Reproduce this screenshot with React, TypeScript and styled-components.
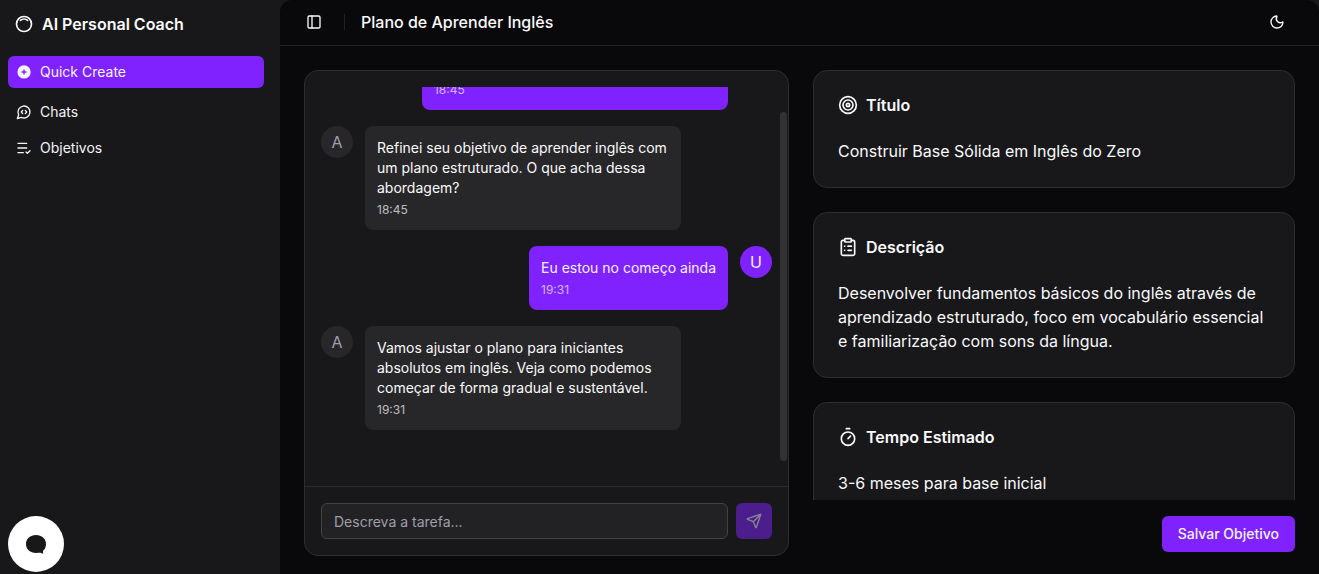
import React from "react";
import styled, { createGlobalStyle } from "styled-components";
import { Target, ClipboardList, Timer, ListCheck, PanelLeft, Moon } from "lucide-react";

const Global = createGlobalStyle`
  *, *::before, *::after { box-sizing: border-box; }
  body {
    margin: 0;
    background: #18181b;
    color: #fafafa;
    font-family: Inter, "Liberation Sans", sans-serif;
    font-size: 16px;
    line-height: 24px;
  }
  button, input { font: inherit; color: inherit; }
  h1, h2, p { margin: 0; }
`;

const Shell = styled.div`
  display: flex;
  height: 100vh;
  overflow: hidden;
`;

const Sidebar = styled.aside`
  flex: 0 0 280px;
  display: flex;
  flex-direction: column;
  padding: 8px 16px 0 8px;
`;

const Brand = styled.a`
  display: flex;
  align-items: center;
  gap: 8px;
  height: 32px;
  padding: 0 6px;
  color: #fafafa;
  font-weight: 600;
  text-decoration: none;
`;

const Nav = styled.nav`
  display: flex;
  flex-direction: column;
  gap: 8px;
  padding-top: 16px;
`;

const NavList = styled.div`
  display: flex;
  flex-direction: column;
  gap: 4px;
`;

const navItem = `
  display: flex;
  align-items: center;
  gap: 8px;
  height: 32px;
  padding: 0 8px;
  border: 0;
  border-radius: 6px;
  font-size: 14px;
  line-height: 20px;
`;

const CreateButton = styled.button`
  ${navItem}
  background: #7f22fe;
  color: #f5f3ff;
  cursor: pointer;
`;

const NavLink = styled.a`
  ${navItem}
  color: #f4f4f5;
  text-decoration: none;
`;

const Main = styled.main`
  flex: 1;
  min-width: 0;
  display: flex;
  flex-direction: column;
  background: #09090b;
  border-radius: 12px 12px 0 0;
`;

const Header = styled.header`
  display: flex;
  align-items: center;
  height: 46px;
  padding: 0 28px 2px 20px;
  border-bottom: 1px solid #222225;
`;

const IconButton = styled.button`
  display: grid;
  place-items: center;
  width: 28px;
  height: 28px;
  padding: 0;
  border: 0;
  border-radius: 6px;
  background: transparent;
  cursor: pointer;
`;

const Divider = styled.span`
  width: 1px;
  height: 16px;
  margin: 0 16px;
  background: #222225;
`;

const PageTitle = styled.h1`
  flex: 1;
  font-size: 16px;
  font-weight: 500;
`;

const Content = styled.div`
  flex: 1;
  min-height: 0;
  display: grid;
  grid-template-columns: minmax(0, 485fr) minmax(0, 482fr);
  gap: 24px;
  padding: 24px 24px 18px;
`;

const Chat = styled.section`
  display: flex;
  flex-direction: column;
  min-height: 0;
  border: 1px solid #2d2d30;
  border-radius: 14px;
  background: #18181b;
  overflow: hidden;
`;

const Conversation = styled.div`
  position: relative;
  flex: 1;
  min-height: 0;
  display: flex;
  flex-direction: column;
  padding: 16px 16px 0;
`;

const Messages = styled.div`
  flex: 1;
  min-height: 0;
  display: flex;
  flex-direction: column;
  justify-content: flex-end;
  gap: 16px;
  padding-bottom: 56px;
  overflow: hidden;
`;

const ScrollThumb = styled.span`
  position: absolute;
  top: 41px;
  right: 1px;
  bottom: 25px;
  width: 7px;
  border-radius: 4px;
  background: #313134;
`;

const MessageRow = styled.div<{ $own?: boolean }>`
  flex: none;
  display: flex;
  flex-direction: ${(p) => (p.$own ? "row-reverse" : "row")};
  align-items: flex-start;
  gap: 12px;
`;

const Avatar = styled.span<{ $own?: boolean }>`
  flex: none;
  display: grid;
  place-items: center;
  width: 32px;
  height: 32px;
  border-radius: 50%;
  background: ${(p) => (p.$own ? "#7f22fe" : "#27272a")};
  color: ${(p) => (p.$own ? "#f5f3ff" : "#9f9fa9")};
`;

const Bubble = styled.div<{ $own?: boolean }>`
  max-width: 70%;
  padding: 12px;
  border-radius: 8px;
  background: ${(p) => (p.$own ? "#7f22fe" : "#27272a")};
  color: ${(p) => (p.$own ? "#f5f3ff" : "#fafafa")};
  font-size: 14px;
  line-height: 20px;
`;

const Time = styled.time`
  display: block;
  margin-top: 4px;
  font-size: 12px;
  line-height: 16px;
  opacity: 0.7;
`;

const Composer = styled.form`
  display: flex;
  gap: 8px;
  padding: 16px;
  border-top: 1px solid #2d2d30;
`;

const TaskInput = styled.input`
  flex: 1;
  min-width: 0;
  height: 36px;
  padding: 0 12px;
  border: 1px solid #434346;
  border-radius: 6px;
  background: #222225;
  font-size: 14px;
  &::placeholder { color: #9f9fa9; opacity: 1; }
`;

const SendButton = styled.button`
  display: grid;
  place-items: center;
  width: 36px;
  height: 36px;
  padding: 0;
  border: 0;
  border-radius: 6px;
  background: #7f22fe;
  color: #f5f3ff;
  opacity: 0.5;
`;

const Details = styled.div`
  display: flex;
  flex-direction: column;
  gap: 16px;
  min-height: 0;
  padding-bottom: 4px;
`;

const Cards = styled.div`
  flex: 1;
  min-height: 0;
  display: flex;
  flex-direction: column;
  gap: 24px;
  overflow: hidden;
`;

const Card = styled.section`
  flex: none;
  display: flex;
  flex-direction: column;
  gap: 24px;
  padding: 24px;
  border: 1px solid #2d2d30;
  border-radius: 14px;
  background: #18181b;
`;

const CardTitle = styled.h2`
  display: flex;
  align-items: center;
  gap: 8px;
  height: 20px;
  font-size: 16px;
  font-weight: 600;
`;

const SaveButton = styled.button`
  align-self: flex-end;
  height: 36px;
  padding: 0 16px;
  border: 0;
  border-radius: 6px;
  background: #7f22fe;
  color: #f5f3ff;
  font-size: 14px;
  font-weight: 500;
  cursor: pointer;
`;

const ChatLauncher = styled.button`
  position: fixed;
  left: 8px;
  bottom: 2px;
  display: grid;
  place-items: center;
  width: 56px;
  height: 56px;
  padding: 0;
  border: 0;
  border-radius: 50%;
  background: #fff;
  color: #18181b;
  cursor: pointer;
`;

const LineIcon = styled.svg.attrs({ viewBox: "0 0 24 24", "aria-hidden": true })`
  flex: none;
  fill: none;
  stroke: currentColor;
  stroke-width: 2;
  stroke-linecap: round;
  stroke-linejoin: round;
`;

const messages = [
  { own: true, text: "Quero aprender inglês, me ajude a estudar", time: "18:45" },
  {
    own: false,
    text: "Refinei seu objetivo de aprender inglês com um plano estruturado. O que acha dessa abordagem?",
    time: "18:45",
  },
  { own: true, text: "Eu estou no começo ainda", time: "19:31" },
  {
    own: false,
    text: "Vamos ajustar o plano para iniciantes absolutos em inglês. Veja como podemos começar de forma gradual e sustentável.",
    time: "19:31",
  },
];

const cards = [
  { icon: Target, title: "Título", text: "Construir Base Sólida em Inglês do Zero" },
  {
    icon: ClipboardList,
    title: "Descrição",
    text: "Desenvolver fundamentos básicos do inglês através de aprendizado estruturado, foco em vocabulário essencial e familiarização com sons da língua.",
  },
  { icon: Timer, title: "Tempo Estimado", text: "3-6 meses para base inicial" },
];

export default function App() {
  return (
    <>
      <Global />
      <Shell>
        <Sidebar>
          <Brand href="#">
            <LineIcon width={20} height={20}>
              <path d="M5.636 5.636a9 9 0 1 0 12.728 12.728a9 9 0 0 0 -12.728 -12.728z" />
              <path d="M16.243 7.757a6 6 0 0 0 -8.486 0" />
            </LineIcon>
            AI Personal Coach
          </Brand>
          <Nav>
            <CreateButton type="button">
              <svg width="16" height="16" viewBox="0 0 24 24" fill="currentColor" aria-hidden="true">
                <path d="M4.929 4.929a10 10 0 1 1 14.141 14.141a10 10 0 0 1 -14.14 -14.14zm8.071 4.071a1 1 0 1 0 -2 0v2h-2a1 1 0 1 0 0 2h2v2a1 1 0 1 0 2 0v-2h2a1 1 0 1 0 0 -2h-2v-2z" />
              </svg>
              Quick Create
            </CreateButton>
            <NavList>
              <NavLink href="#chats">
                <LineIcon width={16} height={16}>
                  <path d="M10 9.5 8 12l2 2.5" />
                  <path d="m14 9.5 2 2.5-2 2.5" />
                  <path d="M7.9 20A9 9 0 1 0 4 16.1L2 22z" />
                </LineIcon>
                Chats
              </NavLink>
              <NavLink href="#objetivos">
                <ListCheck size={16} />
                Objetivos
              </NavLink>
            </NavList>
          </Nav>
        </Sidebar>
        <Main>
          <Header>
            <IconButton type="button" aria-label="Alternar barra lateral">
              <PanelLeft size={16} />
            </IconButton>
            <Divider />
            <PageTitle>Plano de Aprender Inglês</PageTitle>
            <IconButton type="button" aria-label="Alternar tema">
              <Moon size={16} />
            </IconButton>
          </Header>
          <Content>
            <Chat>
              <Conversation>
                <Messages>
                  {messages.map((m, i) => (
                    <MessageRow key={i} $own={m.own}>
                      <Avatar $own={m.own}>{m.own ? "U" : "A"}</Avatar>
                      <Bubble $own={m.own}>
                        <p>{m.text}</p>
                        <Time>{m.time}</Time>
                      </Bubble>
                    </MessageRow>
                  ))}
                </Messages>
                <ScrollThumb />
              </Conversation>
              <Composer onSubmit={(e) => e.preventDefault()}>
                <TaskInput aria-label="Descreva a tarefa" placeholder="Descreva a tarefa..." />
                <SendButton type="submit" aria-label="Enviar" disabled>
                  <LineIcon width={16} height={16}>
                    <path d="M14.536 21.686a.5.5 0 0 0 .937-.024l6.5-19a.496.496 0 0 0-.635-.635l-19 6.5a.5.5 0 0 0-.024.937l7.93 3.18a2 2 0 0 1 1.112 1.11z" />
                    <path d="m21.854 2.147-10.94 10.939" />
                  </LineIcon>
                </SendButton>
              </Composer>
            </Chat>
            <Details>
              <Cards>
                {cards.map(({ icon: Icon, title, text }) => (
                  <Card key={title}>
                    <CardTitle>
                      <Icon size={20} />
                      {title}
                    </CardTitle>
                    <p>{text}</p>
                  </Card>
                ))}
              </Cards>
              <SaveButton type="button">Salvar Objetivo</SaveButton>
            </Details>
          </Content>
        </Main>
      </Shell>
      <ChatLauncher type="button" aria-label="Abrir chat">
        <svg width="20" height="20" viewBox="0 0 20 20" fill="currentColor" aria-hidden="true">
          <path d="M10 1C4.300 1 0 4.700 0 10s4.300 9 10 9c1.800 0 3.300-.2 4.500-.2.700.5 1.600.8 3.100.8-.7-.8-.8-2-.3-3.100C19.100 15 20 12.600 20 10c0-5.300-4.300-9-10-9z" />
        </svg>
      </ChatLauncher>
    </>
  );
}
